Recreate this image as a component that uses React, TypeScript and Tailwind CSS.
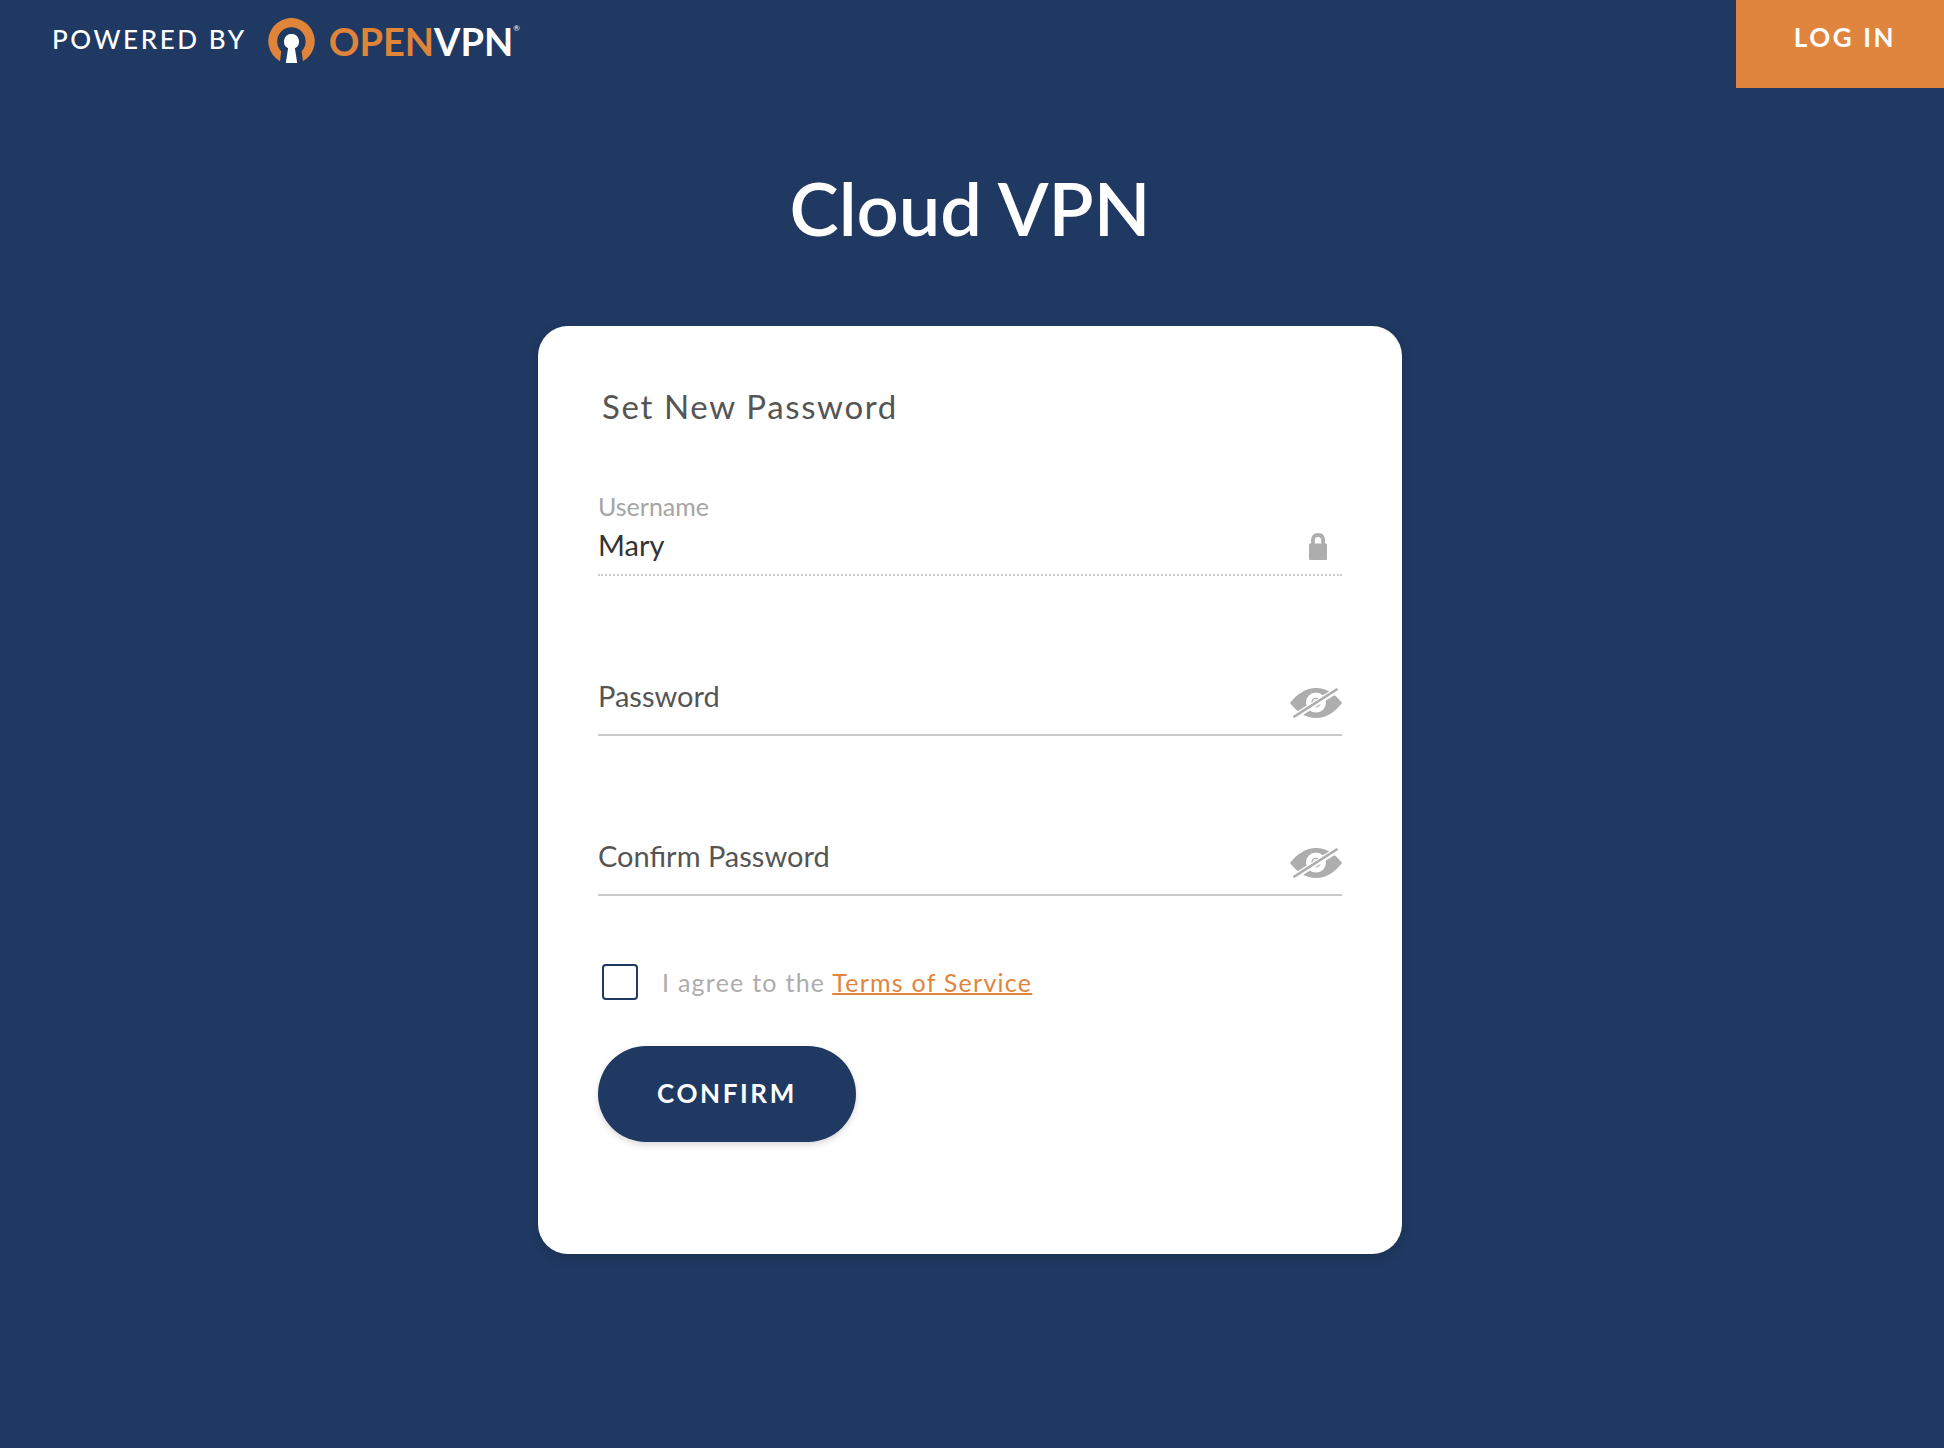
import { useState } from "react"

function OpenVpnMark() {
  return (
    <svg viewBox="0 0 47 46" className="h-[46px] w-[47px]" aria-hidden="true">
      <path
        d="M12 43.3A23.2 23.2 0 1 1 35 43.3L33.6 33.3A14.2 14.2 0 1 0 13.2 33.3Z"
        fill="#e0843a"
      />
      <path
        d="M23.5 16a7.5 7.5 0 0 1 3.4 14.2L29.2 45H17.8L20.1 30.2A7.5 7.5 0 0 1 23.5 16Z"
        fill="#fff"
      />
    </svg>
  )
}

function LockIcon() {
  return (
    <svg viewBox="0 0 18 27" className="mr-[15px] mb-1.5 h-[27px] w-[18px]" aria-hidden="true">
      <rect y="10.5" width="18" height="16.5" rx="1.2" fill="#adadad" />
      <path
        d="M3.9 12V7.2Q3.9 2 9 2T14.1 7.2V12"
        fill="none"
        stroke="#adadad"
        strokeWidth="3.8"
      />
    </svg>
  )
}

function EyeOffIcon() {
  return (
    <svg viewBox="0 0 52 30" className="h-[30px] w-[52px]" aria-hidden="true">
      <path
        d="M0 15C7 6 16 0 26 0S45 6 52 15C45 24 36 30 26 30S7 24 0 15Z"
        fill="#adadad"
      />
      <circle cx="26" cy="14.6" r="10" fill="#fff" />
      <circle cx="26" cy="14.6" r="4.8" fill="#adadad" />
      <path d="M23.5 14.6a2.8 2.8 0 0 1 2.6-2.8" fill="none" stroke="#fff" strokeWidth="1.4" />
      <path d="M2 30.2 50 .2" stroke="#fff" strokeWidth="6" />
      <path d="M3.5 29 47.5 1" stroke="#adadad" strokeWidth="2.6" />
    </svg>
  )
}

type PasswordFieldProps = {
  id: string
  label: string
}

function PasswordField({ id, label }: PasswordFieldProps) {
  const [visible, setVisible] = useState(false)

  return (
    <div className="relative mt-[98px] flex items-end border-b-2 border-[#cbcbcb] pb-4">
      <input
        id={id}
        type={visible ? "text" : "password"}
        placeholder=" "
        className="peer h-11 min-w-0 flex-1 bg-transparent text-[29px] text-[#333] outline-none"
      />
      {/* Label sits over the empty input and floats up once it is filled */}
      <label
        htmlFor={id}
        className="absolute top-0 left-0 text-[29px] leading-11 text-[#555] peer-[:not(:placeholder-shown)]:-top-8 peer-[:not(:placeholder-shown)]:text-[25px]"
      >
        {label}
      </label>
      <button
        type="button"
        aria-label={`Toggle ${label}`}
        onClick={() => setVisible(!visible)}
      >
        <EyeOffIcon />
      </button>
    </div>
  )
}

export default function App() {
  return (
    <div className="min-h-screen bg-[#203962] font-['Lato',sans-serif]">
      {/* Header */}
      <header className="flex items-start justify-between">
        <div className="flex h-[82px] items-center pl-[52px] text-white">
          <span className="pb-1 text-[26px] font-medium tracking-widest">POWERED BY</span>
          <a href="#" aria-label="OpenVPN" className="ml-[21px] flex items-center gap-3.5">
            <OpenVpnMark />
            <span className="flex items-start">
              <span className="text-[38px] leading-[46px] font-bold">
                <span className="text-[#e0843a]">OPEN</span>VPN
              </span>
              <span className="mt-1 text-[8px] leading-3">®</span>
            </span>
          </a>
        </div>
        <a
          href="#"
          className="flex h-[88px] w-52 items-center justify-center bg-[#df853d] pb-3.5 pl-2.5 text-[26px] font-bold tracking-widest text-white"
        >
          LOG IN
        </a>
      </header>

      <main className="flex flex-col items-center pt-20 pr-1 pb-20">
        <h1 className="text-[74px] leading-20 font-semibold text-white">Cloud VPN</h1>

        <form className="mt-[78px] w-full max-w-[864px] rounded-[30px] bg-white px-[60px] pt-[60px] pb-28 shadow-[0_4px_12px_rgba(0,0,0,0.15)]">
          <h2 className="pl-1 text-[33px] leading-10 tracking-wider text-[#555]">
            Set New Password
          </h2>

          <div className="mt-16 border-b-2 border-dotted border-[#cbcbcb] pb-2">
            <label htmlFor="username" className="block text-[25px] leading-8 text-[#a5a5a5]">
              Username
            </label>
            <div className="flex items-end">
              <input
                id="username"
                type="text"
                readOnly
                value="Mary"
                className="h-11 min-w-0 flex-1 bg-transparent text-[29px] text-[#333] outline-none"
              />
              <LockIcon />
            </div>
          </div>

          <PasswordField id="password" label="Password" />
          <PasswordField id="confirm-password" label="Confirm Password" />

          <div className="mt-17 flex items-center gap-6 pl-1">
            <input
              id="terms"
              type="checkbox"
              className="size-9 appearance-none rounded-sm border-2 border-[#203962] checked:bg-[#203962]"
            />
            <label htmlFor="terms" className="text-[25px] leading-9 tracking-wider text-[#adadad]">
              I agree to the{" "}
              <a href="#" className="text-[#df853d] underline decoration-2">
                Terms of Service
              </a>
            </label>
          </div>

          <button
            type="button"
            className="mt-[46px] block h-24 w-[258px] rounded-full bg-[#203962] pb-0.5 text-[26px] font-bold tracking-widest text-white shadow-[0_3px_6px_rgba(0,0,0,0.15)]"
          >
            CONFIRM
          </button>
        </form>
      </main>
    </div>
  )
}
